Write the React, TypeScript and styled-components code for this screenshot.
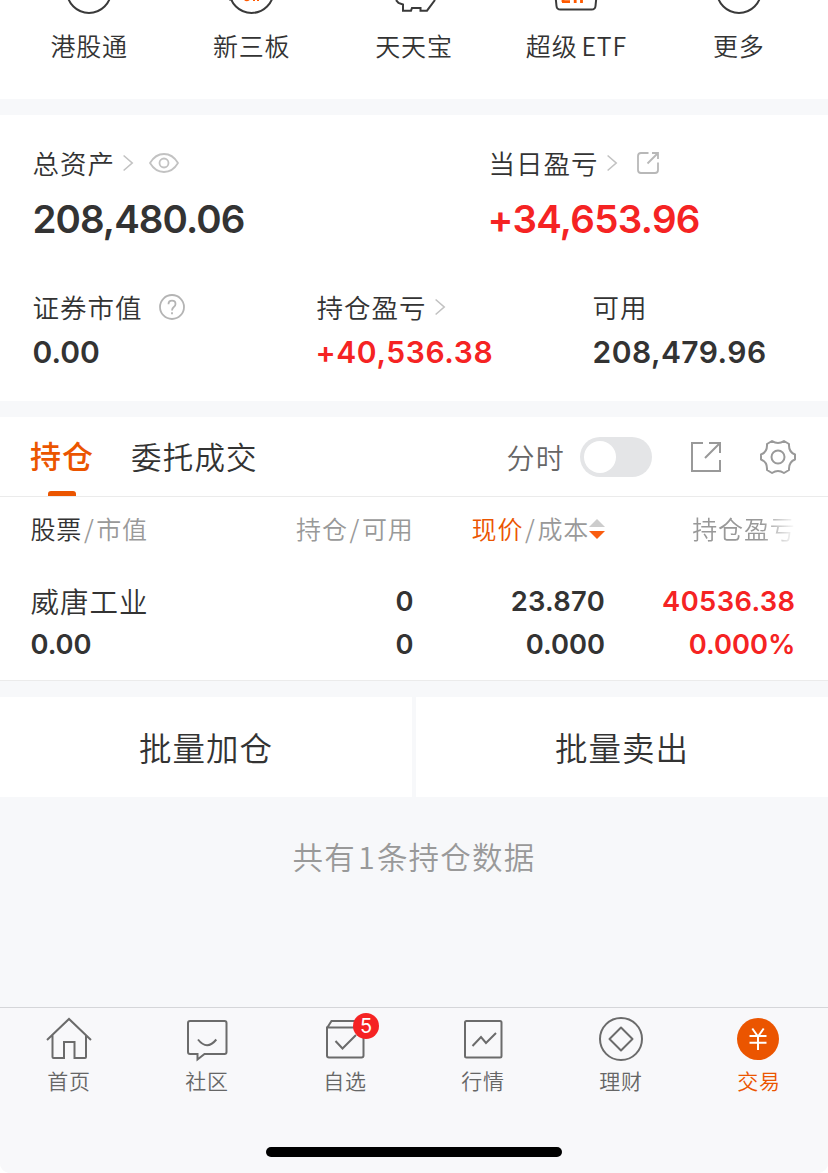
import React from 'react';
import styled, { createGlobalStyle } from 'styled-components';

const Global = createGlobalStyle`
  * { box-sizing: border-box; }
  body {
    margin: 0;
    background: #fff;
    color: #333;
    font-family: "Inter", "Noto Sans CJK SC", sans-serif;
  }
`;

const Screen = styled.div`
  width: 828px;
  height: 1173px;
  display: flex;
  flex-direction: column;
  overflow: hidden;
  background: #f7f8fa;
  border-radius: 0 0 10px 10px;
`;

const Label = styled.span<{ $size: number; $gap: number; $color?: string; $weight?: number; $lift?: number }>`
  font-family: "Noto Sans CJK SC", sans-serif;
  font-size: ${p => p.$size}px;
  letter-spacing: ${p => p.$gap}px;
  font-weight: ${p => p.$weight ?? 350};
  color: ${p => p.$color ?? '#333'};
  line-height: 1;
  padding-bottom: ${p => p.$lift ?? 1}px;
  white-space: nowrap;
`;

const Latin = styled.span<{ $before: number; $after?: number }>`
  margin-left: ${p => p.$before}px;
  margin-right: ${p => p.$after ?? 0}px;
`;

const Amount = styled.span<{ $size: number; $gap?: number; $color?: string }>`
  font-family: "Inter", sans-serif;
  font-weight: 600;
  font-size: ${p => p.$size}px;
  letter-spacing: ${p => p.$gap ?? 0}px;
  color: ${p => p.$color ?? '#333'};
  line-height: 1;
  white-space: nowrap;
`;

const SignedAmount = styled(Amount)`
  margin-left: -1px;
`;

const Services = styled.nav`
  flex: none;
  height: 99px;
  padding: 0 8px;
  display: grid;
  grid-template-columns: repeat(5, 1fr);
  background: #fff;
`;

const Service = styled.div`
  display: flex;
  flex-direction: column;
  align-items: center;
  gap: 17px;
`;

const Account = styled.section`
  flex: none;
  height: 286px;
  margin-top: 16px;
  padding: 34px 33px 0 32.5px;
  background: #fff;
`;

const Summary = styled.div<{ $columns: string }>`
  display: grid;
  grid-template-columns: ${p => p.$columns};
`;

const SecondSummary = styled(Summary)`
  margin-top: 54.5px;
`;

const Stat = styled.div<{ $gap: number }>`
  display: flex;
  flex-direction: column;
  align-items: flex-start;
  gap: ${p => p.$gap}px;
`;

const StatHead = styled.div`
  height: 28px;
  display: flex;
  align-items: center;
`;

const Icon = styled.svg<{ $left?: number }>`
  display: block;
  flex: none;
  overflow: visible;
  fill: none;
  margin-left: ${p => p.$left ?? 0}px;
`;

const Holdings = styled.section`
  flex: none;
  height: 264px;
  margin-top: 16px;
  background: #fff;
  border-bottom: 1px solid #ebebeb;
`;

const HoldingTabs = styled.div`
  height: 80px;
  padding: 0 32px 0 30px;
  display: flex;
  border-bottom: 1px solid #ebebeb;
`;

const HoldingTab = styled.div<{ $left?: number; $top: number }>`
  margin-left: ${p => p.$left ?? 0}px;
  display: flex;
  flex-direction: column;
  align-items: center;
  justify-content: space-between;
  padding-top: ${p => p.$top}px;
`;

const Underline = styled.i`
  width: 28px;
  height: 5px;
  border-radius: 3px 3px 0 0;
  background: #eb5500;
`;

const Tools = styled.div`
  margin-left: auto;
  display: flex;
  align-items: center;
`;

const Switch = styled.div`
  width: 72px;
  height: 40px;
  margin-left: 15px;
  padding: 4px;
  border-radius: 20px;
  background: #e4e5e7;
`;

const Knob = styled.div`
  width: 32px;
  height: 32px;
  border-radius: 50%;
  background: #fff;
`;

const Row = styled.div`
  height: 43px;
  padding: 0 33px 0 30.5px;
  display: grid;
  grid-template-columns: 190px 193px 191.5px 190.5px;
`;

const HeaderRow = styled(Row)`
  height: 64px;
  margin-bottom: 19px;
`;

const Cell = styled.div<{ $end?: boolean; $faded?: boolean }>`
  display: flex;
  align-items: center;
  justify-content: ${p => (p.$end ? 'flex-end' : 'flex-start')};
  mask-image: ${p => (p.$faded ? 'linear-gradient(to right, #000 calc(100% - 34px), transparent)' : 'none')};
`;

const Actions = styled.div`
  flex: none;
  margin-top: 16px;
  height: 100px;
  display: grid;
  grid-template-columns: 1fr 1fr;
  gap: 4px;
`;

const Action = styled.button`
  border: 0;
  padding: 0;
  background: #fff;
  display: flex;
  align-items: center;
  justify-content: center;
`;

const Footnote = styled.div`
  flex: 1;
  padding-top: 44px;
  text-align: center;
  line-height: 1;
`;

const TabBar = styled.nav`
  flex: none;
  height: 166px;
  display: flex;
  flex-direction: column;
  align-items: center;
  justify-content: space-between;
  border-top: 1px solid #d5d6d9;
  background: #f8f8fa;
  padding-bottom: 16px;
`;

const TabItems = styled.div`
  width: 100%;
  display: grid;
  grid-template-columns: repeat(6, 138px);
`;

const TabItem = styled.div`
  position: relative;
  padding-top: 7px;
  display: flex;
  flex-direction: column;
  align-items: center;
  gap: 7px;
`;

const Badge = styled.span`
  position: absolute;
  left: 77px;
  top: 5px;
  width: 26px;
  height: 26px;
  border-radius: 50%;
  background: #f52323;
  color: #fff;
  font: 400 20px/26px "Inter", sans-serif;
  text-align: center;
`;

const HomeIndicator = styled.div`
  width: 296px;
  height: 10px;
  border-radius: 5px;
  background: #000;
`;

const RED = '#f52323';
const ORANGE = '#eb5500';
const GREY = '#999';

const Chevron = ({ left }: { left: number }) => (
  <Icon $left={left} width="10" height="16" viewBox="0 0 10 16" stroke="#c2c2c2" strokeWidth="1.6">
    <path d="M.6.5 9.2 8 .6 15.5" />
  </Icon>
);

const Slash = () => <Latin $before={1.8} $after={1.8}>/</Latin>;

const serviceIcons = [
  <circle cx="32" cy="-9" r="22" />,
  <>
    <circle cx="31.500" cy="-9" r="22" />
    <path d="M9-.5h4" />
    <path d="M25-.5q1.500 1.500 4 0M34-1v2M38-1v2" stroke="#ff5a00" />
  </>,
  <path d="M14 0l2.500 3 4.500 1.500v6.200h8l1-2.700h8.500v2.700H45L53 0" />,
  <>
    <path d="M11.500-4 12.500 6q.3 3.500 4 3.500h31q3.700 0 4-3.500l1-10" />
    <path d="M19-7v9M18 1.700h8M27-7h8M31.200-7v10M37.500 3v-10h6M37.500-1.500h5" stroke="#ff5a00" strokeWidth="2.800" />
  </>,
  <circle cx="32" cy="-9" r="22" />,
];

const services = ['港股通', '新三板', '天天宝', '超级', '更多'];

const navItems = [
  {
    name: '首页',
    icon: <path d="M1 23 23 2l22 21M6.500 18v22q0 1 1 1h10.500V25h10.500v16H39q1 0 1-1V18" />,
  },
  {
    name: '社区',
    icon: (
      <>
        <path d="M6 4h34.500q2 0 2 2v29q0 2-2 2H20.500l-7 5.500V37H6q-2 0-2-2V6q0-2 2-2Z" />
        <path d="M14 22.500q9 11.500 18.300 0" />
      </>
    ),
  },
  {
    name: '自选',
    icon: (
      <>
        <path d="M5 11 9.500 4h28l4 7M5 10.500h36.500v28q0 2-2 2H7q-2 0-2-2Z" />
        <path d="m13.500 24 7 7.500L34 18" />
      </>
    ),
  },
  {
    name: '行情',
    icon: (
      <>
        <rect x="5" y="4" width="36.500" height="36.500" rx="1.500" />
        <path d="m12.500 29 8.500-9 5 6 10-10" />
      </>
    ),
  },
  {
    name: '理财',
    icon: (
      <>
        <circle cx="23" cy="22" r="21" />
        <path d="m23 10.500 11.500 11.500L23 33.500 11.500 22Z" strokeLinejoin="round" />
      </>
    ),
  },
  {
    name: '交易',
    icon: (
      <>
        <circle cx="22" cy="22" r="21" fill={ORANGE} stroke="none" />
        <path d="m16.300 11.500 5.700 8 5.700-8M22 19v14M13.500 19h17M13.500 25.700h17" stroke="#fff" />
      </>
    ),
  },
];

export default function App() {
  return (
    <>
      <Global />
      <Screen>
        <Services>
          {services.map((name, i) => (
            <Service key={name}>
              <Icon width="64" height="16" viewBox="0 0 64 16" stroke="#3a3a3a" strokeWidth="2">
                {serviceIcons[i]}
              </Icon>
              <Label $size={25} $gap={0.8}>
                {name}
                {i === 3 && <Latin $before={4}>ETF</Latin>}
              </Label>
            </Service>
          ))}
        </Services>

        <Account>
          <Summary $columns="456px 1fr">
            <Stat $gap={23}>
              <StatHead>
                <Label $size={26.5} $gap={1} $lift={0}>总资产</Label>
                <Chevron left={8} />
                <Icon $left={16} width="30" height="20" viewBox="0 0 30 20" stroke="#c2c2c2" strokeWidth="1.800">
                  <path d="M1 10C4 5 9 1 15 1s11 4 14 9c-3 5-8 9-14 9S4 15 1 10Z" strokeLinejoin="round" />
                  <circle cx="15" cy="10" r="4.500" />
                </Icon>
              </StatHead>
              <Amount $size={38.5} $gap={-0.95}>208,480.06</Amount>
            </Stat>
            <Stat $gap={23}>
              <StatHead>
                <Label $size={26.5} $gap={1} $lift={0}>当日盈亏</Label>
                <Chevron left={8.5} />
                <Icon $left={20} width="22" height="22" viewBox="0 0 22 22" stroke="#b8b8b8" strokeWidth="1.800">
                  <path d="M11.500 1H4Q1 1 1 4v14q0 3 3 3h14q3 0 3-3v-7.500M15 1h6v6M21 1 10.500 11.500" />
                </Icon>
              </StatHead>
              <SignedAmount $size={38.5} $gap={-0.7} $color={RED}>+34,653.96</SignedAmount>
            </Stat>
          </Summary>
          <SecondSummary $columns="284px 276px 1fr">
            <Stat $gap={16}>
              <StatHead>
                <Label $size={26.5} $gap={1} $lift={0}>证券市值</Label>
                <Icon $left={16} width="26" height="26" viewBox="0 0 26 26" stroke="#b4b4b4" strokeWidth="1.800">
                  <circle cx="13" cy="13" r="12" />
                  <path d="M9.500 10.200Q9.500 6.700 13 6.700t3.500 3.300q0 1.700-1.700 3T13 16.500M13 18.200v2" />
                </Icon>
              </StatHead>
              <Amount $size={30}>0.00</Amount>
            </Stat>
            <Stat $gap={16}>
              <StatHead>
                <Label $size={26.5} $gap={1} $lift={0}>持仓盈亏</Label>
                <Chevron left={8.5} />
              </StatHead>
              <SignedAmount $size={30} $gap={0.6} $color={RED}>+40,536.38</SignedAmount>
            </Stat>
            <Stat $gap={16}>
              <StatHead>
                <Label $size={26.5} $gap={1} $lift={0}>可用</Label>
              </StatHead>
              <Amount $size={30} $gap={0.45}>208,479.96</Amount>
            </Stat>
          </SecondSummary>
        </Account>

        <Holdings>
          <HoldingTabs>
            <HoldingTab $top={22}>
              <Label $size={31} $gap={1} $color={ORANGE} $weight={500}>持仓</Label>
              <Underline />
            </HoldingTab>
            <HoldingTab $left={37} $top={24}>
              <Label $size={30.5} $gap={1.2}>委托成交</Label>
            </HoldingTab>
            <Tools>
              <Label $size={28} $gap={1.2} $color="#666" $lift={0}>分时</Label>
              <Switch><Knob /></Switch>
              <Icon $left={39} width="30" height="30" viewBox="0 0 30 30" stroke="#999" strokeWidth="2">
                <path d="M12 1H1v28h28V18M18 1h11v10M29 1 14 16" />
              </Icon>
              <Icon $left={39} width="36" height="36" viewBox="0 0 36 36" stroke="#999" strokeWidth="2" strokeLinejoin="round">
                <path d="M12 2q6 4 12 0l5 3q-.5 8 6 10.500v5q-6.500 2.500-6 10.500l-5 3q-6-4-12 0l-5-3q.5-8-6-10.500v-5Q7.500 13 7 5Z" />
                <circle cx="18" cy="18" r="6.500" />
              </Icon>
            </Tools>
          </HoldingTabs>
          <HeaderRow>
            <Cell>
              <Label $size={25} $gap={0.8}>股票</Label>
              <Label $size={25} $gap={0.8} $color={GREY}><Slash />市值</Label>
            </Cell>
            <Cell $end><Label $size={25} $gap={0.8} $color={GREY}>持仓<Slash />可用</Label></Cell>
            <Cell $end>
              <Label $size={25} $gap={0.8} $color={ORANGE}>现价</Label>
              <Label $size={25} $gap={0.8} $color={GREY}><Slash />成本</Label>
              <Icon width="16" height="20" viewBox="0 0 16 20">
                <path d="M8 0 16 8H0Z" fill="#ccc" />
                <path d="M8 20 0 12h16Z" fill="#f95d10" />
              </Icon>
            </Cell>
            <Cell $end $faded><Label $size={25} $gap={0.8} $color={GREY}>持仓盈亏</Label></Cell>
          </HeaderRow>
          <Row>
            <Cell><Label $size={28.5} $gap={1}>威唐工业</Label></Cell>
            <Cell $end><Amount $size={27.3}>0</Amount></Cell>
            <Cell $end><Amount $size={27.3} $gap={0.3}>23.870</Amount></Cell>
            <Cell $end><Amount $size={27.3} $gap={0.4} $color={RED}>40536.38</Amount></Cell>
          </Row>
          <Row>
            <Cell><Amount $size={27.3} $gap={-0.1}>0.00</Amount></Cell>
            <Cell $end><Amount $size={27.3}>0</Amount></Cell>
            <Cell $end><Amount $size={27.3}>0.000</Amount></Cell>
            <Cell $end><Amount $size={27.3} $color={RED}>0.000%</Amount></Cell>
          </Row>
        </Holdings>

        <Actions>
          <Action><Label $size={32.5} $gap={1} $lift={0}>批量加仓</Label></Action>
          <Action><Label $size={32.5} $gap={1} $lift={0}>批量卖出</Label></Action>
        </Actions>

        <Footnote>
          <Label $size={30.5} $gap={1.2} $color={GREY}>共有<Latin $before={2} $after={1}>1</Latin>条持仓数据</Label>
        </Footnote>

        <TabBar>
          <TabItems>
            {navItems.map((item, i) => (
              <TabItem key={item.name}>
                <Icon width="46" height="48" viewBox="0 -2 46 48" stroke="#6b6b6b" strokeWidth="2">
                  {item.icon}
                </Icon>
                <Label $size={21} $gap={0.8} $color={i === 5 ? ORANGE : '#666'}>{item.name}</Label>
                {i === 2 && <Badge>5</Badge>}
              </TabItem>
            ))}
          </TabItems>
          <HomeIndicator />
        </TabBar>
      </Screen>
    </>
  );
}
